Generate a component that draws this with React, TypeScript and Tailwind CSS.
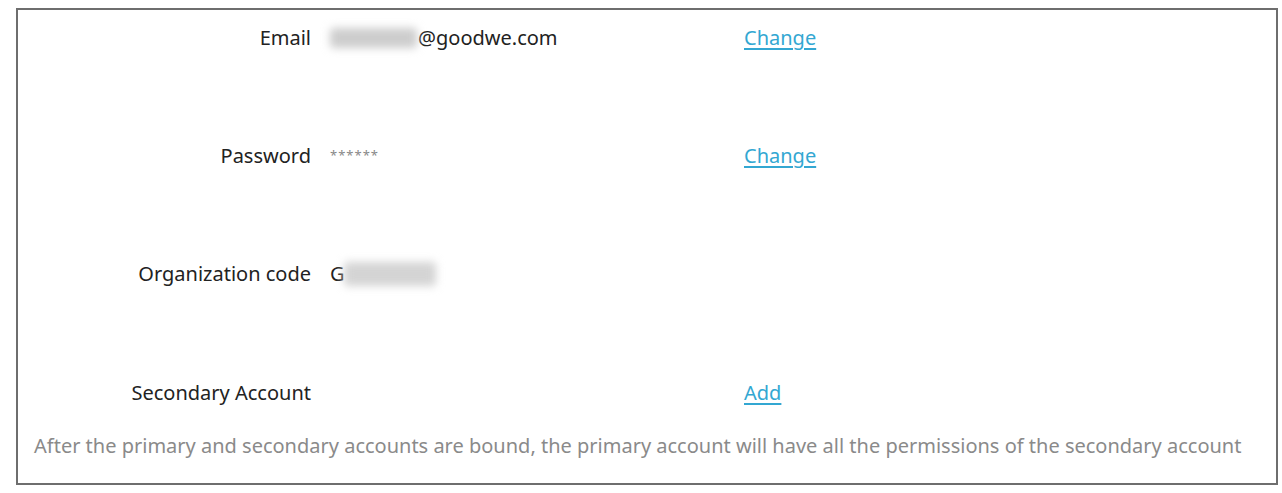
const font = { fontFamily: '"Segoe UI", "Noto Sans", "Open Sans", sans-serif' }

const Row = ({ label, children, action, className = '' }: { label: string; children?: React.ReactNode; action?: string; className?: string }) => (
  <div className={`flex h-[40px] items-center ${className}`}>
    <div className="w-[293px] shrink-0 text-right text-[20px] text-[#222]">{label}</div>
    <div className="ml-[19px] flex w-[414px] shrink-0 items-center text-[20px] text-[#222]">{children}</div>
    {action && (
      <a href="#" className="text-[20px] text-[#33a7d2] underline underline-offset-[3px]">
        {action}
      </a>
    )}
  </div>
)

export default function App() {
  return (
    <div className="min-h-[493px] bg-white pl-[16px] pt-[8px]" style={font}>
      <div className="h-[477px] w-[1262px] border-2 border-[#6e6e6e] pt-[8px]">
        <Row label="Email" action="Change">
          <span className="mr-[1px] inline-block h-[20px] w-[87px] rounded-sm bg-[#cdcdcd] blur-[4px]" />
          <span>@goodwe.com</span>
        </Row>
        <Row label="Password" action="Change" className="mt-[78px]">
          <span className="text-[13px] tracking-[1px] text-[#888]">******</span>
        </Row>
        <Row label="Organization code" className="mt-[78px]">
          <span>G</span>
          <span className="-ml-[1px] inline-block h-[24px] w-[92px] rounded-sm bg-[#d4d4d4] blur-[4px]" />
        </Row>
        <Row label="Secondary Account" action="Add" className="mt-[79px]" />
        <div className="mt-[13px] flex h-[40px] items-center pl-[16px] text-[20px] text-[#8a8a8a]">
          After the primary and secondary accounts are bound, the primary account will have all the permissions of the secondary account
        </div>
      </div>
    </div>
  )
}
